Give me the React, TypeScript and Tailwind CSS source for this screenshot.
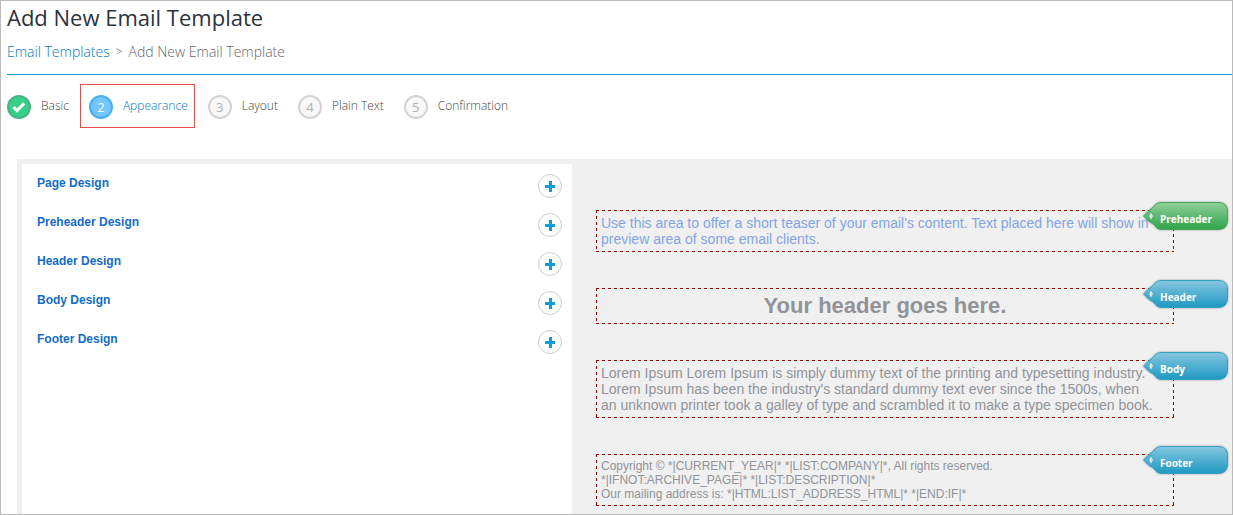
import React from "react";

const stepBase = "flex h-6 w-6 shrink-0 items-center justify-center rounded-full border-2 text-[13px] leading-none font-normal";

type Step = { label: string; mark: React.ReactNode; circle: string; text: string; box: string };

const CheckMark = () => (
  <svg viewBox="0 0 14 14" className="h-3.5 w-3.5" aria-hidden="true">
    <path d="M1.5 7.2 5 10.6 12.2 3.4" fill="none" stroke="#fff" strokeWidth="3" />
  </svg>
);

const steps: Step[] = [
  { label: "Basic", mark: <CheckMark />, circle: "border-[#4bb182] bg-[#36d089] text-white", text: "text-[#444]", box: "border-transparent pl-0" },
  { label: "Appearance", mark: "2", circle: "border-[#4aaef0] bg-[#72c6fb] text-white", text: "text-[#0078c0]", box: "border-[#e8504a] pl-2" },
  { label: "Layout", mark: "3", circle: "border-[#d3d3d3] bg-[#f8f8f8] text-[#b0b0b0]", text: "text-[#444]", box: "border-transparent pl-2" },
  { label: "Plain Text", mark: "4", circle: "border-[#d3d3d3] bg-[#f8f8f8] text-[#b0b0b0]", text: "text-[#444]", box: "border-transparent pl-2" },
  { label: "Confirmation", mark: "5", circle: "border-[#d3d3d3] bg-[#f8f8f8] text-[#b0b0b0]", text: "text-[#444]", box: "border-transparent pl-2" },
];

const designs = ["Page Design", "Preheader Design", "Header Design", "Body Design", "Footer Design"];

function TagShape({ id, from, to, edge }: { id: string; from: string; to: string; edge: string }) {
  return (
    <svg viewBox="0 0 90 34" className="absolute inset-0 h-full w-full" aria-hidden="true">
      <defs>
        <linearGradient id={id} x1="0" y1="0" x2="0" y2="1">
          <stop offset="0" stopColor={from} />
          <stop offset="1" stopColor={to} />
        </linearGradient>
        <filter id={id + "-shadow"} x="-10%" y="-20%" width="120%" height="140%">
          <feDropShadow dx="0" dy="0" stdDeviation="1" floodColor="#000" floodOpacity="0.35" />
        </filter>
      </defs>
      <path
        d="M3.5 17 L9.500 11 Q13 9 14.5 6.5 Q17 3.5 21 3.5 H78 Q87.500 3.5 87.500 12 V21 Q87.500 30.500 78 30.500 H21 Q17 30.500 14.500 26.500 Q13 24 9.500 23 Z"
        fill={`url(#${id})`}
        stroke={edge}
        filter={`url(#${id}-shadow)`}
      />
      <path d="M11 12.300 L8.500 17 L11 21.700 L13.500 17 Z" fill="#dbe2e3" stroke={edge} strokeWidth="0.8" />
    </svg>
  );
}

function Section({ tag, green = false, className, children }: { tag: string; green?: boolean; className: string; children: React.ReactNode }) {
  return (
    <section className="relative border border-transparent bg-[repeating-linear-gradient(90deg,#990000_0_3px,transparent_3px_6px),repeating-linear-gradient(90deg,#990000_0_3px,transparent_3px_6px),repeating-linear-gradient(180deg,#990000_0_3px,transparent_3px_6px),repeating-linear-gradient(180deg,#990000_0_3px,transparent_3px_6px)] bg-[position:0_0,0_100%,0_0,100%_0] bg-[size:100%_1px,100%_1px,1px_100%,1px_100%] bg-no-repeat bg-origin-border">
      <div className={className}>{children}</div>
      <a href={"#" + tag.toLowerCase()} className="absolute -top-3 -right-[57px] h-[34px] w-[90px]">
        {green ? (
          <TagShape id={tag} from="#90d099" to="#2da349" edge="#3fa75b" />
        ) : (
          <TagShape id={tag} from="#86c7df" to="#1d98c3" edge="#369fc2" />
        )}
        <span className="relative block pt-[11px] pl-5 text-[10px] leading-[18px] font-bold text-white font-['Open_Sans',sans-serif]">{tag}</span>
      </a>
    </section>
  );
}

export default function App() {
  return (
    <div className="flex min-h-screen flex-col overflow-hidden border border-[#bababa] bg-white font-['Open_Sans',sans-serif]">
      <header className="ml-1.5 border-b border-[#0e9fd0]">
        <h1 className="pb-0.5 text-[22px] leading-8 font-normal text-[#2b333b]">Add New Email Template</h1>
        <nav aria-label="Breadcrumb" className="flex gap-1.5 pt-1.5 pb-[11px] text-[14px] leading-[22px] font-light text-[#666]">
          <a href="#templates" className="text-[#0078c0]">Email Templates</a>
          <span className="text-[12px]">&gt;</span>
          <span>Add New Email Template</span>
        </nav>
      </header>
      <ol className="flex h-[84px] items-start gap-1 pt-[9px] pl-[5px]">
        {steps.map((s) => (
          <li key={s.label}>
            <a href={"#" + s.label} className={`flex h-11 items-center gap-2.5 border pt-0.5 pr-1.5 text-[12px] font-light ${s.box} ${s.text}`}>
              <span className={`${stepBase} ${s.circle}`}>{s.mark}</span>
              <span className="pb-0.5">{s.label}</span>
            </a>
          </li>
        ))}
      </ol>
      <main className="ml-4 flex flex-1 bg-[#f0f0f0] pt-[5px] pl-[5px] font-['Liberation_Sans',sans-serif]">
        <ul className="w-[550px] shrink-0 bg-white">
          {designs.map((d) => (
            <li key={d} className="flex h-[39px] items-start justify-between pr-2.5 pl-[15px]">
              <h2 className="pt-[11px] text-[12px] leading-4 font-bold text-[#126ccc]">{d}</h2>
              <button type="button" aria-label={"Expand " + d} className="mt-2.5 flex h-6 w-6 items-center justify-center rounded-full border border-[#ccc] bg-white">
                <svg viewBox="0 0 12 12" className="h-3 w-3" aria-hidden="true">
                  <path d="M6.500 1V12M1 6.500H11" stroke="#119bdc" strokeWidth="3" />
                </svg>
              </button>
            </li>
          ))}
        </ul>
        <div className="mr-[58px] ml-6 flex min-w-0 flex-1 flex-col gap-9 pt-[46px] text-[#919399]">
          <Section tag="Preheader" green className="p-1 text-[14px] leading-4 text-[#82a5e3]">
            Use this area to offer a short teaser of your email's content. Text placed here will show in
            <br />
            preview area of some email clients.
          </Section>
          <Section tag="Header" className="py-1 text-center text-[22px] leading-[26px] font-bold">Your header goes here.</Section>
          <Section tag="Body" className="p-1 text-[14px] leading-4">
            Lorem Ipsum Lorem Ipsum is simply dummy text of the printing and typesetting industry.
            <br />
            Lorem Ipsum has been the industry's standard dummy text ever since the 1500s, when
            <br />
            an unknown printer took a galley of type and scrambled it to make a type specimen book.
          </Section>
          <Section tag="Footer" className="p-1 text-[12px] leading-[14px]">
            <p>Copyright © *|CURRENT_YEAR|* *|LIST:COMPANY|*, All rights reserved.</p>
            <p>*|IFNOT:ARCHIVE_PAGE|* *|LIST:DESCRIPTION|*</p>
            <p>Our mailing address is: *|HTML:LIST_ADDRESS_HTML|* *|END:IF|*</p>
          </Section>
        </div>
      </main>
    </div>
  );
}
